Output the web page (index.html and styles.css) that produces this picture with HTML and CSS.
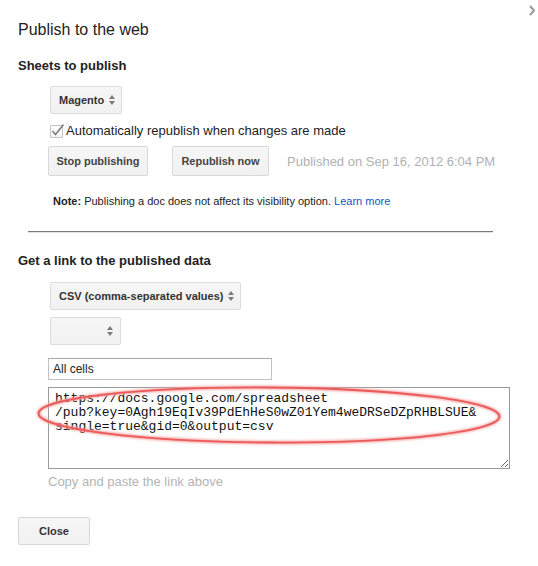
FILE: index.html
```html
<!DOCTYPE html>
<html>
<head>
<meta charset="utf-8">
<title>Publish to the web</title>
<link rel="stylesheet" href="styles.css">
</head>
<body>
<div class="dialog">
  <svg class="chevron" width="6" height="11" viewBox="0 0 6 11"><path d="M1 1 L5 5.5 L1 10" fill="none" stroke="#9a9a9a" stroke-width="2"/></svg>
  <h1 class="title">Publish to the web</h1>

  <h2 class="section-title first">Sheets to publish</h2>
  <div class="section-body">
    <div class="select select-sheet">
      <span>Magento</span>
      <svg class="arrows" width="6" height="10" viewBox="0 0 6 10"><path d="M0 4 L3 0 L6 4 Z M0 6 L6 6 L3 10 Z" fill="#7a7a7a"/></svg>
    </div>
    <label class="check-row">
      <span class="checkbox"><svg width="15" height="15" viewBox="0 0 15 15"><path d="M2.5 8 L5.5 11.5 L13.5 1.5" fill="none" stroke="#7d7d7d" stroke-width="1.6"/></svg></span>
      <span>Automatically republish when changes are made</span>
    </label>
    <div class="button-row">
      <button class="btn btn-stop">Stop publishing</button>
      <button class="btn btn-republish">Republish now</button>
      <span class="published">Published on Sep 16, 2012 6:04 PM</span>
    </div>
    <p class="note"><b>Note:</b> Publishing a doc does not affect its visibility option. <a class="link" href="#">Learn more</a></p>
  </div>

  <div class="divider"></div>

  <h2 class="section-title second">Get a link to the published data</h2>
  <div class="section-body">
    <div class="select select-csv">
      <span>CSV (comma-separated values)</span>
      <svg class="arrows" width="6" height="10" viewBox="0 0 6 10"><path d="M0 4 L3 0 L6 4 Z M0 6 L6 6 L3 10 Z" fill="#7a7a7a"/></svg>
    </div>
    <div class="select select-empty">
      <svg class="arrows" width="6" height="10" viewBox="0 0 6 10"><path d="M0 4 L3 0 L6 4 Z M0 6 L6 6 L3 10 Z" fill="#7a7a7a"/></svg>
    </div>
    <input class="range-input" type="text" value="All cells">
    <textarea class="link-box" spellcheck="false">https://docs.google.com/spreadsheet
/pub?key=0Agh19EqIv39PdEhHeS0wZ01Yem4weDRSeDZpRHBLSUE&amp;
single=true&amp;gid=0&amp;output=csv</textarea>
    <p class="hint">Copy and paste the link above</p>
  </div>

  <button class="btn btn-close">Close</button>

  <svg class="annotation" width="538" height="566" viewBox="0 0 538 566">
    <defs>
      <filter id="glow" x="-10%" y="-50%" width="120%" height="200%">
        <feGaussianBlur stdDeviation="1.2"/>
      </filter>
    </defs>
    <ellipse cx="269" cy="415" rx="230.5" ry="27.5" fill="none" stroke="#f3a0a0" stroke-width="3.5" filter="url(#glow)" transform="rotate(0.4 269 415)"/>
    <ellipse cx="269" cy="415" rx="230.5" ry="27.5" fill="none" stroke="#ec5a5a" stroke-width="1.8" transform="rotate(0.4 269 415)"/>
  </svg>
</div>
</body>
</html>
```

FILE: styles.css
```css
html, body {
  margin: 0;
  padding: 0;
  background: #ffffff;
}

body {
  font-family: "Liberation Sans", Arial, sans-serif;
  color: #222222;
}

.dialog {
  position: relative;
  width: 538px;
  height: 566px;
  box-sizing: border-box;
  padding: 20px 0 0 18px;
}

.chevron {
  position: absolute;
  top: 5px;
  right: 3px;
}

.title {
  margin: 0;
  font-size: 16px;
  line-height: 20px;
  font-weight: normal;
  color: #222222;
}

.section-title {
  margin: 0;
  font-size: 13px;
  line-height: 16px;
  font-weight: bold;
  color: #222222;
}

.section-title.first {
  margin-top: 18px;
}

.section-title.second {
  margin-top: 20px;
}

.section-body {
  padding-left: 32px;
}

.select {
  display: flex;
  align-items: center;
  justify-content: space-between;
  gap: 5px;
  width: max-content;
  height: 28px;
  box-sizing: border-box;
  padding: 0 7px 0 8px;
  border: 1px solid #dcdcdc;
  border-radius: 2px;
  background: linear-gradient(#f6f6f6, #f1f1f1);
  font-size: 11px;
  font-weight: bold;
  color: #333333;
  white-space: nowrap;
  margin-top: 12px;
}

.select-sheet {
  width: 72px;
}

.select-csv {
  margin-top: 13px;
  min-width: 189px;
  padding-right: 6px;
}

.select-empty {
  margin-top: 7px;
  width: 71px;
  justify-content: flex-end;
}

.arrows {
  display: block;
  flex: none;
}

.check-row {
  display: flex;
  align-items: center;
  gap: 3px;
  margin-top: 8px;
  height: 18px;
  font-size: 13px;
  line-height: 18px;
  color: #222222;
}

.checkbox {
  position: relative;
  width: 13px;
  height: 13px;
  box-sizing: border-box;
  border: 1px solid #c4c4c4;
  border-radius: 1px;
  background: linear-gradient(#ffffff, #f3f3f3);
  flex: none;
}

.checkbox svg {
  position: absolute;
  left: -1px;
  top: -3px;
}

.button-row {
  display: flex;
  align-items: center;
  margin-top: 6px;
  margin-left: -2px;
  height: 30px;
}

.btn {
  height: 30px;
  box-sizing: border-box;
  border: 1px solid #d8d8d8;
  border-radius: 2px;
  background: linear-gradient(#f6f6f6, #f1f1f1);
  font-family: "Liberation Sans", Arial, sans-serif;
  font-size: 11px;
  font-weight: bold;
  color: #444444;
  padding: 0;
  margin: 0;
  text-align: center;
}

.btn-stop {
  width: 100px;
}

.btn-republish {
  width: 97px;
  margin-left: 24px;
}

.published {
  margin-left: 18px;
  font-size: 13px;
  color: #b1b1b1;
}

.note {
  margin: 18px 0 0 3px;
  font-size: 11px;
  line-height: 14px;
  color: #222222;
}

.link {
  color: #1155cc;
  text-decoration: none;
}

.divider {
  margin-top: 23px;
  margin-left: 10px;
  width: 465px;
  height: 1px;
  background: #7b7b7b;
  border-bottom: 1px solid #e3e3e3;
}

.range-input {
  display: block;
  margin: 13px 0 0 -2px;
  width: 224px;
  height: 22px;
  box-sizing: border-box;
  border: 1px solid #c2c2c2;
  border-top-color: #a8a8a8;
  border-radius: 0;
  padding: 0 4px;
  font-family: "Liberation Sans", Arial, sans-serif;
  font-size: 12px;
  color: #222222;
  outline: none;
}

.link-box {
  display: block;
  margin: 7px 0 0 -2px;
  width: 462px;
  height: 82px;
  box-sizing: border-box;
  border: 1px solid #9c9c9c;
  border-radius: 0;
  padding: 4px 6px;
  font-family: "Liberation Mono", "Courier New", monospace;
  font-size: 13px;
  line-height: 14px;
  color: #111111;
  resize: both;
  outline: none;
  overflow: hidden;
  white-space: pre;
}

.hint {
  margin: 4.5px 0 0 -2px;
  font-size: 13px;
  line-height: 16px;
  color: #b4b4b4;
}

.btn-close {
  display: block;
  margin-top: 27.5px;
  width: 72px;
  height: 28px;
  color: #333333;
}

.annotation {
  position: absolute;
  left: 0;
  top: 0;
  pointer-events: none;
}
```
